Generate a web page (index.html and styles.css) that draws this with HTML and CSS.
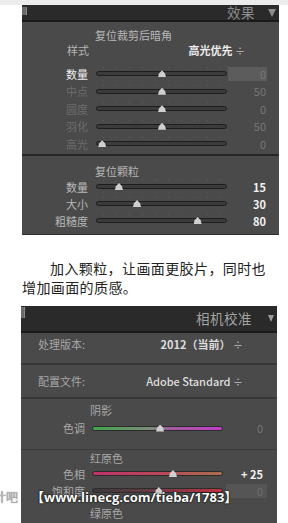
FILE: index.html
```html
<!DOCTYPE html>
<html lang="zh-CN">
<head>
    <meta charset="UTF-8">
    <meta name="viewport" content="width=device-width, initial-scale=1.0">
    <title>效果 / 相机校准</title>
    <link rel="stylesheet" href="styles.css">
</head>
<body>

    <div class="strip"></div>

    <!-- Effects panel -->
    <section class="panel panel-fx">
        <div class="panel-head">
            <span class="head-tab"></span>
            <span class="head-title">效果</span>
            <span class="head-arrow"></span>
        </div>

        <div class="group group-vignette">
            <div class="group-title">复位裁剪后暗角</div>
            <div class="select-row">
                <span>样式</span>
                <span class="select">高光优先 <em>÷</em></span>
            </div>
            <div class="slider-row active">
                <span class="label">数量</span>
                <div class="track"><i class="thumb" style="left: 50.4%"></i></div>
                <span class="value box">0</span>
            </div>
            <div class="slider-row dim">
                <span class="label">中点</span>
                <div class="track"><i class="thumb" style="left: 50.4%"></i></div>
                <span class="value">50</span>
            </div>
            <div class="slider-row dim">
                <span class="label">圆度</span>
                <div class="track"><i class="thumb" style="left: 50.4%"></i></div>
                <span class="value">0</span>
            </div>
            <div class="slider-row dim">
                <span class="label">羽化</span>
                <div class="track"><i class="thumb" style="left: 50.4%"></i></div>
                <span class="value">50</span>
            </div>
            <div class="slider-row dim">
                <span class="label">高光</span>
                <div class="track"><i class="thumb" style="left: 4%"></i></div>
                <span class="value">0</span>
            </div>
        </div>

        <div class="group group-grain">
            <div class="group-title">复位颗粒</div>
            <div class="slider-row">
                <span class="label">数量</span>
                <div class="track"><i class="thumb" style="left: 17%"></i></div>
                <span class="value strong">15</span>
            </div>
            <div class="slider-row">
                <span class="label">大小</span>
                <div class="track"><i class="thumb" style="left: 31%"></i></div>
                <span class="value strong">30</span>
            </div>
            <div class="slider-row">
                <span class="label">粗糙度</span>
                <div class="track"><i class="thumb" style="left: 78%"></i></div>
                <span class="value strong">80</span>
            </div>
        </div>
    </section>

    <p class="note">加入颗粒，让画面更胶片，同时也增加画面的质感。</p>

    <!-- Camera calibration panel -->
    <section class="panel panel-cal">
        <div class="panel-head">
            <span class="head-tab"></span>
            <span class="head-title">相机校准</span>
            <span class="head-arrow"></span>
        </div>

        <div class="cal-row first">
            <span>处理版本:</span>
            <span class="select">2012（当前） <em>÷</em></span>
        </div>
        <div class="cal-row second">
            <span>配置文件:</span>
            <span class="select plain">Adobe Standard <em>÷</em></span>
        </div>

        <div class="cal-group shadows">
            <div class="group-title">阴影</div>
            <div class="slider-row">
                <span class="label">色调</span>
                <div class="track tint"><i class="thumb" style="left: 52%"></i></div>
                <span class="value">0</span>
            </div>
        </div>

        <div class="cal-group reds">
            <div class="group-title">红原色</div>
            <div class="slider-row">
                <span class="label">色相</span>
                <div class="track hue"><i class="thumb" style="left: 62%"></i></div>
                <span class="value strong">+ 25</span>
            </div>
            <div class="slider-row">
                <span class="label">饱和度</span>
                <div class="track sat"><i class="thumb" style="left: 51%"></i></div>
                <span class="value box">0</span>
            </div>
            <div class="group-title next">绿原色</div>
        </div>
    </section>

    <!-- Watermark over the screenshot -->
    <div class="watermark-tail">计吧</div>
    <div class="watermark">【www.linecg.com/tieba/1783】</div>

</body>
</html>
```

FILE: styles.css
```css
* {
    box-sizing: border-box;
}

body {
    margin: 0;
    width: 288px;
    height: 523px;
    overflow: hidden;
    position: relative;
    background: #ffffff;
    font-family: "Noto Sans CJK SC", "Noto Sans", sans-serif;
}

.strip {
    height: 5px;
    background: #ececec;
}

/* Panels */
.panel {
    background: #4a4a4a;
    color: #b4b4b4;
    font-size: 11px;
    line-height: 14px;
}

.panel-fx {
    margin-left: 22px;
    width: 257px;
    border-bottom: 1px solid #2e2e2e;
}

.panel-cal {
    margin-left: 21px;
    width: 256px;
    height: 217px;
}

.panel-head {
    display: flex;
    align-items: center;
    height: 17px;
    background: #2a2a2a;
    border-bottom: 2px solid #1a1a1a;
    color: #8c8c8c;
}

.panel-cal .panel-head {
    height: 27px;
    color: #a2a2a2;
}

.head-tab {
    width: 5px;
    height: 8px;
    margin-top: -4px;
    background: #6a6a6a;
    border-right: 1px solid #8a8a8a;
}

.panel-cal .head-tab {
    width: 4px;
    height: 11px;
    margin-top: -12px;
}

.head-title {
    margin-left: auto;
    font-size: 13.5px;
    line-height: 15px;
    letter-spacing: 0.5px;
}

.head-arrow {
    width: 0;
    height: 0;
    margin: 0 3px 0 13px;
    border-left: 4px solid transparent;
    border-right: 4px solid transparent;
    border-top: 8px solid #8c8c8c;
}

.panel-cal .head-arrow {
    margin: -1px 3px 0 16px;
    border-left-width: 3.5px;
    border-right-width: 3.5px;
    border-top: 7px solid #9a9a9a;
}

/* Groups */
.group-title {
    padding-left: 73px;
    color: #b8b8b8;
}

.group-vignette {
    padding: 6px 0 1.5px;
    border-bottom: 2px solid #262626;
}

.group-grain {
    padding: 8px 0 5px;
}

.select-row {
    display: flex;
    justify-content: space-between;
    height: 17px;
    line-height: 17px;
    padding: 0 34px 0 45px;
    margin-bottom: 6px;
}

.select {
    color: #ececec;
    font-weight: bold;
}

.select.plain {
    font-weight: 500;
}

.select em {
    font-style: normal;
    font-weight: normal;
    color: #bdbdbd;
    font-size: 10px;
}

/* Sliders */
.slider-row {
    display: grid;
    grid-template-columns: 66px 139px 1fr;
    align-items: center;
    height: 17.5px;
    color: #b8b8b8;
}

.group-grain .slider-row {
    height: 17px;
}

.label {
    text-align: right;
}

.track {
    position: relative;
    margin-left: 8px;
    height: 5px;
    border: 1px solid #1e1e1e;
    border-radius: 3px;
    background: #3b3b3b;
}

.track::before {
    content: "";
    position: absolute;
    left: 6px;
    right: 4px;
    top: -5px;
    height: 1px;
    background: repeating-linear-gradient(90deg, #5d5d5d 0 1px, transparent 1px 13px);
}

.thumb {
    position: absolute;
    bottom: -2px;
    width: 8px;
    height: 7px;
    transform: translateX(-50%);
    background: #cfcfcf;
    clip-path: polygon(50% 0, 88% 45%, 100% 100%, 0 100%, 12% 45%);
}

.value {
    text-align: right;
    padding-right: 13px;
    color: #777777;
}

.value.strong {
    color: #f2f2f2;
    font-weight: bold;
}

.value.box {
    margin: 0 12px 0 1px;
    padding-right: 1px;
    height: 14px;
    line-height: 14px;
    background: #5c5c5c;
}

.slider-row.active .label {
    color: #eeeeee;
}

.slider-row.dim .label {
    color: #6c6c6c;
}

/* Camera calibration */
.cal-row {
    display: flex;
    justify-content: space-between;
    padding: 4px 34px 0 17px;
    border-bottom: 2px solid #383838;
    color: #a6a6a6;
}

.cal-row.first {
    height: 32px;
}

.cal-row.second {
    height: 34px;
    padding-top: 9px;
}

.cal-row .select {
    color: #dedede;
}

.cal-group {
    border-bottom: 1px solid #3c3c3c;
}

.cal-group .group-title {
    padding-left: 69px;
    color: #a8a8a8;
}

.cal-group .slider-row {
    grid-template-columns: 64px 138px 1fr;
    height: 17px;
    color: #a8a8a8;
}

.cal-group .track {
    margin-left: 7px;
    height: 5px;
    border-color: #2c2c2c;
}

.cal-group .track::before {
    display: none;
}

.cal-group .value {
    padding-right: 14px;
}

.cal-group .value.box {
    margin: 0 10px 0 3px;
    padding-right: 4px;
    background: #555555;
    color: #6e6e6e;
}

.track.tint {
    background: linear-gradient(90deg, #3fa84a, #7f8a7a 45%, #a35ca0 60%, #c03cc6);
}

.track.hue {
    background: linear-gradient(90deg, #c02f6a, #b84a58 55%, #a8704e);
}

.track.sat {
    background: linear-gradient(90deg, #3a3a3a, #6a3a44 45%, #c7313f);
}

.shadows {
    height: 51px;
    padding-top: 4px;
}

.shadows .slider-row {
    margin-top: 2.5px;
}

.reds {
    padding-top: 1px;
    border-bottom: none;
}

.reds .slider-row:first-of-type {
    margin-top: 1.5px;
}

.group-title.next {
    margin-top: 7px;
}

/* Body text */
.note {
    margin: 23.5px 0 9.5px 22px;
    width: 250px;
    font-size: 14px;
    line-height: 19px;
    letter-spacing: 0.4px;
    text-indent: 28px;
    color: #222222;
}

/* Watermark */
.watermark {
    position: absolute;
    top: 488px;
    left: 31px;
    font-family: "Open Sans", "Noto Sans CJK SC", sans-serif;
    font-size: 13px;
    font-weight: bold;
    line-height: 18px;
    color: #ffffff;
    text-shadow: 0 0 2px #000, 0 0 1px #000;
}

.watermark-tail {
    position: absolute;
    top: 489px;
    left: -6px;
    font-size: 12px;
    line-height: 16px;
    color: #b8b8b8;
    text-shadow: 0 0 1px #555;
}
```
